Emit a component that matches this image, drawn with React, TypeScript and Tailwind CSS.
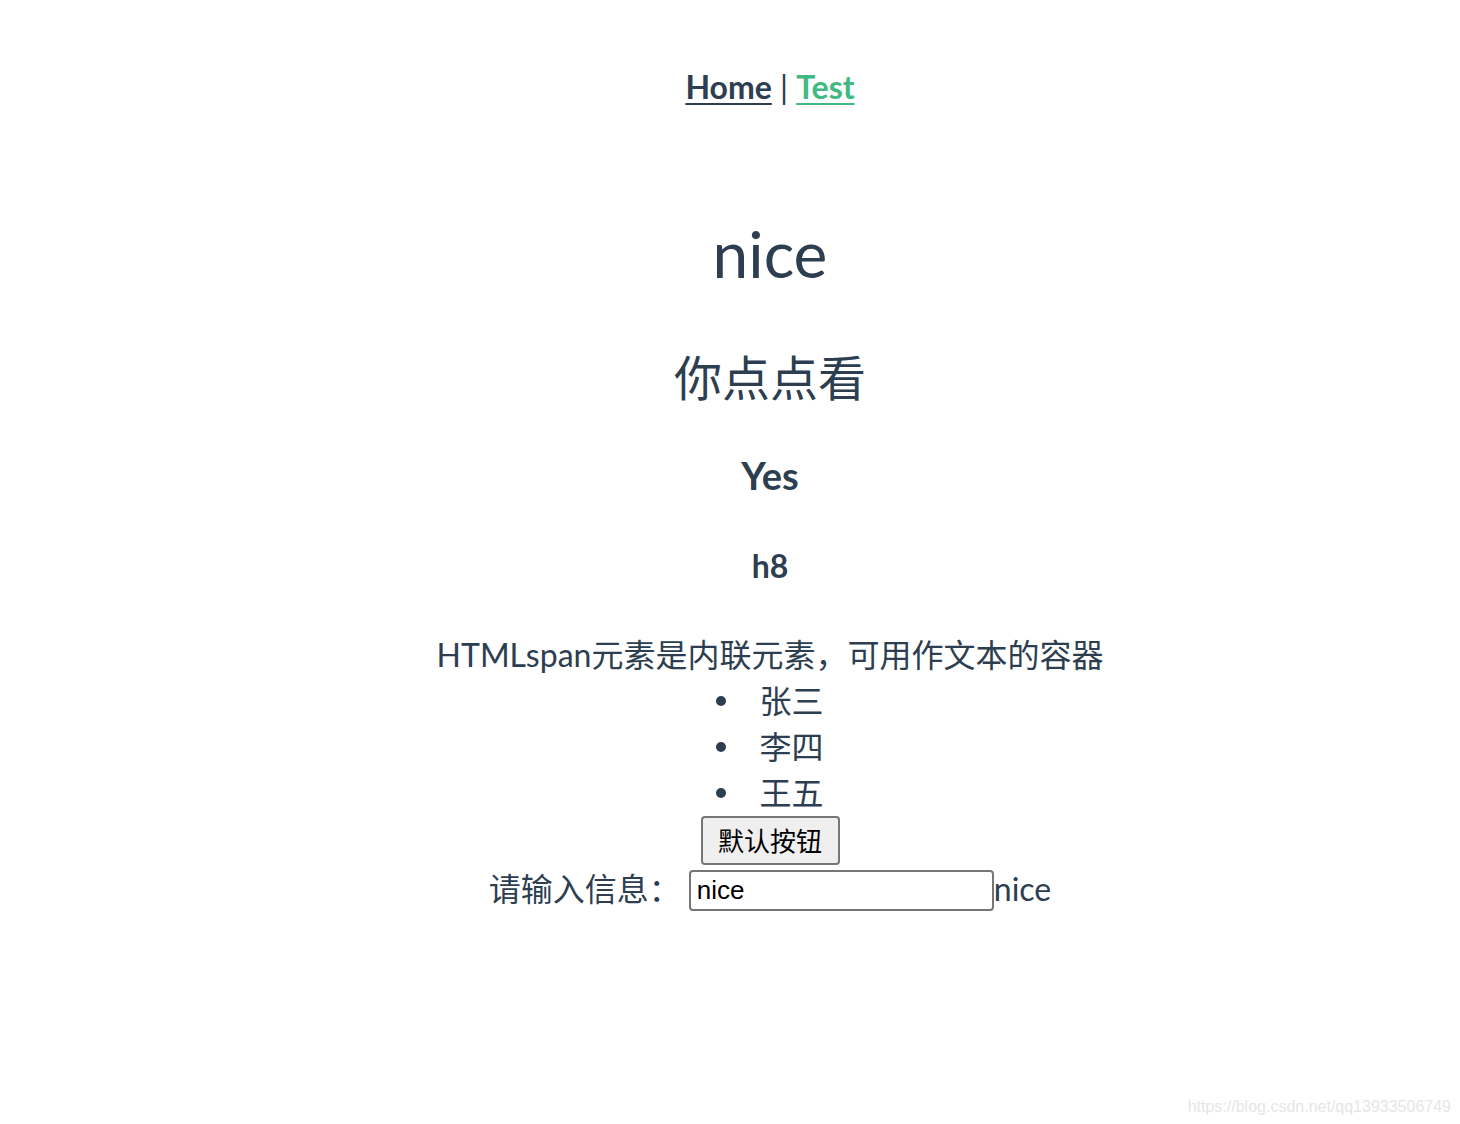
import React from 'react';

const names = ['张三', '李四', '王五'];

export default function App() {
  return (
    <div
      className="relative min-h-[1124px] bg-white pl-[80px] text-center text-[#2c3e50]"
      style={{ fontFamily: 'Lato, "Noto Sans CJK SC", sans-serif' }}
    >
      <nav className="pt-[63px] text-[32px] font-bold leading-[48px]">
        <a className="underline decoration-2 underline-offset-4">Home</a>
        <span className="font-normal"> | </span>
        <a className="text-[#42b983] underline decoration-2 underline-offset-4">Test</a>
      </nav>

      <h1 className="mt-[103px] text-[64px] font-normal leading-[80px]">nice</h1>
      <h2 className="mt-[54px] text-[48px] font-normal leading-[60px]">你点点看</h2>
      <h3 className="mt-[44px] text-[38px] font-bold leading-[46px]">Yes</h3>
      <h4 className="mt-[48px] text-[32px] font-bold leading-[40px]">h8</h4>

      <div className="mt-[46px] text-[32px] leading-[46px]">
        <span>HTMLspan元素是内联元素，可用作文本的容器</span>
        <ul>
          {names.map(n => (
            <li key={n} className="flex items-center justify-center">
              <span className="mr-[33px] inline-block h-[10px] w-[10px] rounded-full bg-[#2c3e50]"></span>
              {n}
            </li>
          ))}
        </ul>
      </div>

      <button className="h-[49px] w-[139px] rounded-[4px] border-2 border-[#767676] bg-[#efefef] text-[26px] leading-none text-black">
        默认按钮
      </button>

      <div className="mt-[5px] flex h-[41px] items-center justify-center text-[32px]">
        <span className="-mt-[3px]">请输入信息：</span>
        <span className="w-[8px]"></span>
        <input
          readOnly
          value="nice"
          className="h-[41px] w-[305px] rounded-[4px] border-2 border-[#767676] px-[6px] text-[26px] text-black outline-none"
          style={{ fontFamily: '"Liberation Sans", Arial, sans-serif' }}
        />
        <span className="-mt-[3px]">nice</span>
      </div>

      <div
        className="absolute right-[9px] top-[1095px] text-[16px] text-[#e6e6e6]"
        style={{ fontFamily: '"Liberation Sans", Arial, sans-serif' }}
      >
        https://blog.csdn.net/qq13933506749
      </div>
    </div>
  );
}
